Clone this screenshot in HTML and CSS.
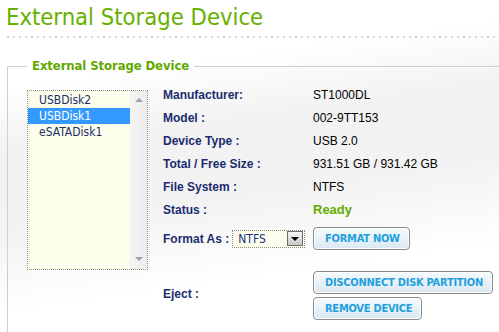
FILE: index.html
```html
<!DOCTYPE html>
<html>
<head>
<meta charset="utf-8">
<link rel="stylesheet" href="styles.css">
</head>
<body>
<div class="page">
  <h1 class="title">External Storage Device</h1>
  <div class="dots"></div>
  <fieldset class="panel">
    <legend class="legend">External Storage Device</legend>
    <div class="panel-body">
      <div class="listbox">
        <div class="list-items">
          <div class="item">USBDisk2</div>
          <div class="item selected">USBDisk1</div>
          <div class="item">eSATADisk1</div>
        </div>
        <div class="scrollbar">
          <span class="arrow up"></span>
          <span class="arrow down"></span>
        </div>
      </div>
      <div class="info">
        <div class="label">Manufacturer:</div><div class="value">ST1000DL</div>
        <div class="label">Model :</div><div class="value">002-9TT153</div>
        <div class="label">Device Type :</div><div class="value">USB 2.0</div>
        <div class="label">Total / Free Size :</div><div class="value">931.51 GB / 931.42 GB</div>
        <div class="label">File System :</div><div class="value">NTFS</div>
        <div class="label">Status :</div><div class="value ready">Ready</div>
        <div class="label row-format">Format As : <span class="select"><span class="select-text">NTFS</span><span class="select-btn"></span></span></div>
        <div class="value row-format"><button class="btn">FORMAT NOW</button></div>
        <div class="label row-eject">Eject :</div>
        <div class="value row-eject stack"><button class="btn">DISCONNECT DISK PARTITION</button><button class="btn">REMOVE DEVICE</button></div>
      </div>
    </div>
  </fieldset>
</div>
</body>
</html>
```
FILE: styles.css
```css
html, body {
  margin: 0;
  height: 100%;
}
body {
  overflow: hidden;
  background: linear-gradient(172deg, #ffffff 22%, #f2f2f2 38%, #f3f3f3 58%, #ffffff 78%);
}
.page {
  width: 499px;
  height: 332px;
  overflow: hidden;
}
.title {
  margin: 0;
  padding: 2px 0 0 6px;
  font: normal 23.6px/30px "DejaVu Sans Condensed", "DejaVu Sans", sans-serif;
  color: #66b000;
}
.dots {
  height: 2px;
  margin: 4px 0 0 7px;
  background: linear-gradient(to right, #d3d7cb 2px, transparent 2px) 0 0 / 6px 2px repeat-x;
}
.panel {
  margin: 20px -30px 0 7px;
  padding: 9px 0 60px 19px;
  border: 1px solid #cfcfcf;
  border-right: none;
  min-height: 300px;
}
.legend {
  padding: 0 5px;
  font: bold 13px/16px "DejaVu Sans Condensed", "DejaVu Sans", sans-serif;
  letter-spacing: -0.1px;
  color: #5fa800;
}
.panel-body {
  display: flex;
  align-items: flex-start;
}
.listbox {
  margin-top: 7px;
  width: 119px;
  height: 178px;
  border: 1px dotted #8c8c8c;
  background: #fdfdeb;
  display: flex;
}
.list-items {
  flex: 1;
  padding-top: 1px;
}
.item {
  height: 16px;
  line-height: 16px;
  padding-left: 11px;
  font: 12px/16px "DejaVu Sans Condensed", "DejaVu Sans", sans-serif;
  color: #1a2f6e;
}
.item.selected {
  background: #3399ff;
  color: #ffffff;
}
.scrollbar {
  width: 17px;
  background: linear-gradient(to right, #f4f4f4, #ececec);
  display: flex;
  flex-direction: column;
  justify-content: space-between;
  align-items: center;
  padding: 7px 0 8px;
  box-sizing: border-box;
}
.arrow {
  width: 0;
  height: 0;
  border-left: 4px solid transparent;
  border-right: 4px solid transparent;
}
.arrow.up {
  border-bottom: 4px solid #a0a0a0;
}
.arrow.down {
  border-top: 4px solid #a0a0a0;
}
.info {
  margin-left: 15px;
  display: grid;
  grid-template-columns: 150px auto;
  grid-template-rows: repeat(6, 23px) auto auto;
  align-items: center;
}
.label {
  font: bold 12px/14px "Liberation Sans", Arial, sans-serif;
  color: #1b2c6f;
  white-space: nowrap;
}
.value {
  font: 12px/14px "Liberation Sans", Arial, sans-serif;
  color: #000000;
  white-space: nowrap;
}
.value.ready {
  font-weight: bold;
  font-size: 13px;
  color: #66aa00;
}
.row-format {
  padding-top: 6px;
  display: flex;
  align-items: center;
}
.row-eject {
  padding-top: 21px;
}
.label.row-eject {
  align-self: stretch;
  display: flex;
  align-items: center;
  padding-bottom: 4px;
}
.stack {
  display: flex;
  flex-direction: column;
  align-items: flex-start;
  gap: 3px;
}
.select {
  display: inline-flex;
  align-items: center;
  justify-content: space-between;
  box-sizing: border-box;
  width: 73px;
  height: 18px;
  margin-left: 3px;
  border: 1px dotted #8c8c8c;
  background: #fdfdeb;
}
.select-text {
  padding-left: 5px;
  font: normal 12px/14px "DejaVu Sans Condensed", "DejaVu Sans", sans-serif;
  color: #1a2f8a;
}
.select-btn {
  box-sizing: border-box;
  width: 16px;
  height: 15px;
  margin-right: 1px;
  border: 1px solid #6e6e6e;
  background: linear-gradient(#f6f6f6, #c6c6c6);
  display: flex;
  align-items: center;
  justify-content: center;
}
.select-btn::after {
  content: "";
  width: 0;
  height: 0;
  border-left: 4px solid transparent;
  border-right: 4px solid transparent;
  border-top: 4px solid #000;
}
.btn {
  height: 23px;
  box-sizing: border-box;
  padding: 0 9px 0 11px;
  border: 1px solid #8a8a8a;
  border-radius: 4px;
  background: linear-gradient(#f5fafd, #dae8f1);
  box-shadow: inset 0 0 0 1px #ffffff;
  font: bold 11px/21px "DejaVu Sans Condensed", "DejaVu Sans", sans-serif;
  letter-spacing: -0.25px;
  color: #1fa0dc;
  white-space: nowrap;
  cursor: pointer;
}
```
